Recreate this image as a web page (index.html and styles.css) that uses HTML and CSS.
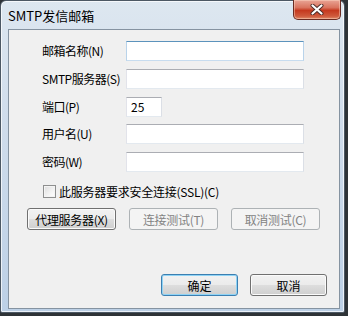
FILE: index.html
```html
<!DOCTYPE html>
<html lang="zh-CN">
<head>
  <meta charset="UTF-8">
  <title>SMTP发信邮箱</title>
  <link rel="stylesheet" href="styles.css">
</head>
<body>
  <div class="window">
    <!-- title bar -->
    <div class="titlebar">
      <span class="title">SMTP发信邮箱</span>
      <button class="close-btn" title="关闭">
        <svg width="14" height="11" viewBox="0 0 14 11">
          <path d="M2.5 1.5 L11.5 9.5 M11.5 1.5 L2.5 9.5" stroke="#4a2a26" stroke-width="4" stroke-linecap="round"/>
          <path d="M2.5 1.5 L11.5 9.5 M11.5 1.5 L2.5 9.5" stroke="#ffffff" stroke-width="2.2" stroke-linecap="round"/>
        </svg>
      </button>
    </div>

    <!-- client area -->
    <div class="client">
      <div class="form">
        <label for="boxName">邮箱名称(N)</label>
        <input type="text" id="boxName" class="focused">

        <label for="server">SMTP服务器(S)</label>
        <input type="text" id="server">

        <label for="port">端口(P)</label>
        <input type="text" id="port" class="short" value="25">

        <label for="user">用户名(U)</label>
        <input type="text" id="user">

        <label for="pass">密码(W)</label>
        <input type="password" id="pass">
      </div>

      <label class="check-row">
        <span class="checkbox"></span>
        <span>此服务器要求安全连接(SSL)(C)</span>
      </label>

      <div class="btn-row">
        <button class="btn">代理服务器(X)</button>
        <button class="btn" disabled>连接测试(T)</button>
        <button class="btn" disabled>取消测试(C)</button>
      </div>

      <div class="footer">
        <button class="btn btn-default">确定</button>
        <button class="btn">取消</button>
      </div>
    </div>
  </div>
</body>
</html>
```

FILE: styles.css
```css
/* Win7 style dialog */
body {
  margin: 0;
  background: #2e3337;
  font-family: "Noto Sans CJK SC", sans-serif;
  font-size: 12px;
  color: #000;
}

.window {
  width: 345px;
  height: 313px;
  box-sizing: border-box;
  border: 1px solid #4c5864;
  border-radius: 6px 6px 2px 2px;
  background: linear-gradient(to bottom, #dde7f0 0%, #cfdceb 40%, #bcd0e6 100%);
  box-shadow: inset 0 0 0 1px rgba(255, 255, 255, 0.7);
  padding: 0 4px 3px 7px;
  display: flex;
  flex-direction: column;
}

.titlebar {
  height: 29px;
  display: flex;
  align-items: flex-start;
  justify-content: space-between;
  margin-top: -1px;
}

.title {
  padding-top: 8px;
  font-size: 13px;
  line-height: 16px;
  color: #000;
}

.close-btn {
  width: 48px;
  height: 20px;
  margin-right: -1px;
  padding: 0;
  border: 1px solid #6a2b22;
  border-top: none;
  border-radius: 0 0 5px 5px;
  background: linear-gradient(to bottom, #e9a596 0%, #d9735e 40%, #c5391f 55%, #cf5a3c 85%, #e08a6a 100%);
  box-shadow: inset 0 0 0 1px rgba(255, 220, 200, 0.45);
  display: flex;
  align-items: center;
  justify-content: center;
}

.client {
  flex: 1;
  border: 1px solid #8593a1;
  background: #f0f0f0;
  padding: 11px 12px 12px 18px;
  display: flex;
  flex-direction: column;
}

.form {
  display: grid;
  grid-template-columns: 84px 178px;
  grid-auto-rows: 20px;
  row-gap: 7.75px;
  padding-left: 15px;
  align-items: center;
}

.form label {
  line-height: 20px;
  letter-spacing: -0.5px;
  white-space: nowrap;
}

.form input {
  height: 20px;
  box-sizing: border-box;
  margin: 0;
  padding: 0 4px;
  border: 1px solid;
  border-color: #abadb3 #dbdfe6 #e3e9ef #e2e3ea;
  background: #fff;
  font-family: inherit;
  font-size: 12px;
  outline: none;
}

.form input.focused {
  border-color: #5c93bc #b9d3ea #c7dcef #b9d3ea;
}

.form input.short {
  width: 36px;
}

.check-row {
  display: flex;
  align-items: center;
  gap: 3px;
  height: 14px;
  margin-top: 12px;
  padding-left: 16px;
  letter-spacing: -0.25px;
  white-space: nowrap;
}

.checkbox {
  width: 13px;
  height: 13px;
  box-sizing: border-box;
  border: 1px solid #8e8f8f;
  background: linear-gradient(135deg, #dcdcdc 0%, #f4f4f4 60%, #ffffff 100%);
  box-shadow: inset 0 0 0 1px #f4f4f4;
}

.btn-row {
  display: flex;
  gap: 13px;
  margin-top: 10px;
}

.btn {
  height: 22px;
  margin: 0;
  padding: 0;
  border: 1px solid #707070;
  border-radius: 3px;
  background: linear-gradient(to bottom, #f2f2f2 0%, #ebebeb 48%, #dddddd 52%, #cfcfcf 100%);
  box-shadow: inset 0 0 0 1px #fbfbfb;
  font-family: inherit;
  font-size: 12px;
  letter-spacing: -0.3px;
  color: #000;
}

.btn-row .btn {
  width: 89px;
}

.btn:disabled {
  border-color: #adb2b5;
  background: #f4f4f4;
  box-shadow: none;
  color: #838383;
}

.footer {
  margin-top: auto;
  display: flex;
  justify-content: flex-end;
  gap: 12px;
}

.footer .btn {
  width: 77px;
  letter-spacing: 0;
}

.btn-default {
  border-color: #3c7fb1;
  box-shadow: inset 0 0 0 1px #8fd3f5;
}
```
